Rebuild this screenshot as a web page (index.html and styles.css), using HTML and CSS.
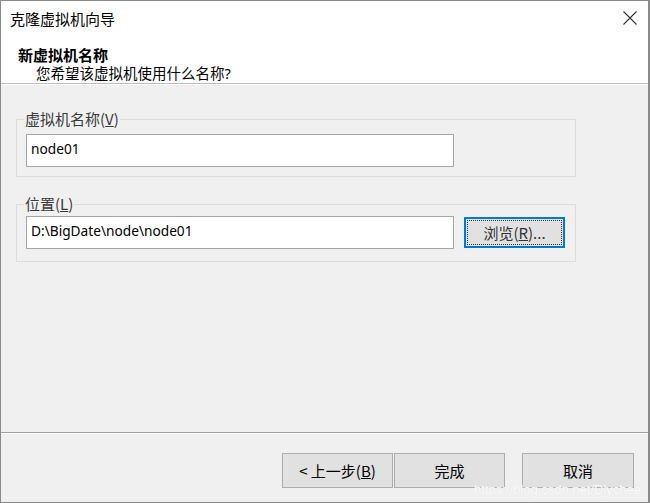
FILE: index.html
```html
<!DOCTYPE html>
<html lang="zh-CN">
<head>
<meta charset="utf-8">
<title>克隆虚拟机向导</title>
<link rel="stylesheet" href="styles.css">
</head>
<body>
<div class="window">
  <div class="titlebar">
    <span class="title">克隆虚拟机向导</span>
    <span class="close">
      <svg width="14" height="14" viewBox="0 0 14 14"><path d="M0.5 0.5 L13.5 13.5 M13.5 0.5 L0.5 13.5" stroke="#333" stroke-width="1.1" fill="none"/></svg>
    </span>
  </div>
  <div class="header">
    <div class="heading">新虚拟机名称</div>
    <div class="subheading">您希望该虚拟机使用什么名称?</div>
  </div>
  <div class="main">
    <fieldset class="group group-name">
      <legend>虚拟机名称(<u>V</u>)</legend>
      <div class="field">node01</div>
    </fieldset>
    <fieldset class="group group-loc">
      <legend>位置(<u>L</u>)</legend>
      <div class="row">
        <div class="field">D:\BigDate\node\node01</div>
        <button class="btn browse"><span class="focus">浏览(<u>R</u>)...</span></button>
      </div>
    </fieldset>
  </div>
  <div class="footer">
    <button class="btn wide">&lt; 上一步(<u>B</u>)</button>
    <button class="btn wide">完成</button>
    <button class="btn wide cancel">取消</button>
  </div>
  <div class="watermark">https://blog.csdn.net/Dlychee</div>
</div>
</body>
</html>
```
FILE: styles.css
```css
html, body {
  margin: 0;
  padding: 0;
}
body {
  font-family: "Segoe UI", "Noto Sans", "Noto Sans CJK SC", sans-serif;
  font-size: 15px;
  color: #000;
  background: #fff;
}
.window {
  position: relative;
  width: 650px;
  height: 503px;
  box-sizing: border-box;
  border: 1px solid #8a8a8a;
  border-right-width: 2px;
  background: #f0f0f0;
  display: flex;
  flex-direction: column;
  overflow: hidden;
}
.titlebar {
  height: 36px;
  background: #fff;
  display: flex;
  align-items: center;
  justify-content: space-between;
  padding: 0 11px 0 9px;
  flex: none;
}
.title {
  font-family: "Noto Sans CJK SC", sans-serif;
  font-size: 15px;
  line-height: 36px;
  color: #000;
}
.close {
  display: flex;
  width: 14px;
  height: 14px;
  margin-top: -2px;
}
.header {
  background: #fff;
  padding: 8px 0 1px 17px;
  border-bottom: 1px solid #bdbdbd;
  flex: none;
}
.heading {
  font-family: "Noto Sans CJK SC", sans-serif;
  font-weight: 700;
  font-size: 15px;
  line-height: 19px;
}
.subheading {
  font-family: "Noto Sans", "Noto Sans CJK SC", sans-serif;
  font-size: 14.5px;
  line-height: 18px;
  padding-left: 18px;
}
.main {
  flex: 1;
  border-top: 1px solid #fff;
  padding: 24px 0 0 15px;
}
.group {
  width: 560px;
  box-sizing: border-box;
  margin: 0;
  border: 1px solid #dcdcdc;
  padding: 0 9px;
}
.group legend {
  font-family: "Noto Sans CJK SC", sans-serif;
  font-size: 15px;
  line-height: 20px;
  color: #3a3a3a;
  padding: 0 1px;
  margin-left: -2px;
}
.group-name {
  padding-top: 5px;
  padding-bottom: 9px;
}
.group-loc {
  margin-top: 17px;
  padding-top: 2px;
  padding-bottom: 12px;
}
.row {
  display: flex;
  align-items: center;
  gap: 10px;
}
.field {
  box-sizing: border-box;
  width: 428px;
  height: 33px;
  background: #fff;
  border: 1px solid #a5a5a5;
  padding: 0 4px;
  font-family: "Noto Sans", sans-serif;
  font-size: 13.7px;
  line-height: 28px;
  color: #000;
}
.btn {
  box-sizing: border-box;
  background: #e1e1e1;
  border: 1px solid #adadad;
  font-family: "Noto Sans CJK SC", sans-serif;
  font-size: 15px;
  color: #000;
  padding: 0;
  margin: 0;
}
.browse {
  width: 101px;
  height: 31px;
  border: 1px solid #0078d7;
  box-shadow: inset 0 0 0 1px #0078d7;
  padding: 2px;
  display: flex;
  color: #333;
}
.browse .focus {
  flex: 1;
  border: 1px dotted #333;
  display: flex;
  align-items: center;
  justify-content: center;
}
.footer {
  flex: none;
  border-top: 1px solid #a0a0a0;
  box-shadow: inset 0 1px 0 #fff;
  padding: 20px 14px 14px 0;
  display: flex;
  justify-content: flex-end;
  gap: 1px;
}
.wide {
  width: 111px;
  height: 35px;
}
.cancel {
  width: 112px;
  margin-left: 16px;
}
.watermark {
  position: absolute;
  right: 7px;
  bottom: 5px;
  font-family: "Liberation Sans", sans-serif;
  font-size: 13px;
  color: #fbfbfb;
  text-shadow: 0 0 1px #dcdcdc;
}
```
